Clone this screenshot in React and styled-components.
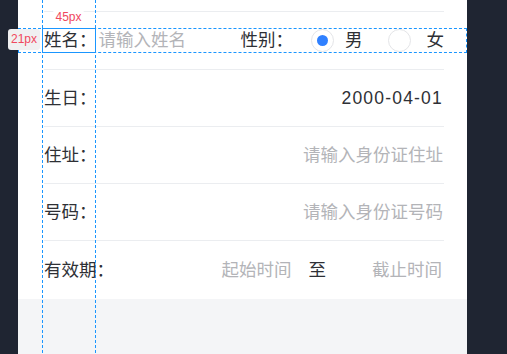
import React from "react";
import styled, { createGlobalStyle } from "styled-components";

const Global = createGlobalStyle`
  html, body { margin: 0; padding: 0; height: 100%; }
  body {
    background: #1f2532;
    font-family: "Liberation Sans", "Noto Sans CJK SC", sans-serif;
  }
  #root { height: 100%; }
`;

const Page = styled.div`
  position: relative;
  height: 354px;
  overflow: hidden;
  display: flex;
`;

const Panel = styled.div`
  margin-left: 18px;
  width: 449px;
  display: flex;
  flex-direction: column;
  background: #f4f5f7;
`;

const List = styled.div`
  background: #fff;
  padding: 0 23px 0 26px;
  font-size: 17.5px;
  color: #323233;
`;

const Row = styled.div`
  height: ${(p) => p.$h}px;
  display: flex;
  align-items: center;
  border-bottom: ${(p) => (p.$last ? "none" : "1px solid #ebedf0")};
  line-height: 1.2;
  white-space: nowrap;
`;

const Label = styled.span`
  flex: none;
  margin-right: ${(p) => p.$mr || 0}px;
  color: #2e3035;
`;

const Placeholder = styled.span`
  color: #b3b4b8;
  flex: ${(p) => (p.$grow ? 1 : "none")};
  text-align: ${(p) => p.$align || "left"};
  width: ${(p) => (p.$w ? `${p.$w}px` : "auto")};
  padding-right: ${(p) => p.$pr || 0}px;
`;

const Value = styled.span`
  margin-left: auto;
  margin-right: 1px;
  color: #2e3035;
  letter-spacing: 1.2px;
`;

const Spacer = styled.span`
  flex: 1;
`;

const To = styled.span`
  margin-left: 17px;
  color: #2e3035;
`;

const Radio = styled.span`
  flex: none;
  box-sizing: border-box;
  width: 23px;
  height: 23px;
  border-radius: 50%;
  border: 1px solid #e4e5e8;
  display: flex;
  align-items: center;
  justify-content: center;
  margin-left: ${(p) => p.$ml}px;
  &::after {
    content: "";
    width: 11px;
    height: 11px;
    border-radius: 50%;
    background: ${(p) => (p.$checked ? "#2f80ff" : "transparent")};
  }
`;

const OptionText = styled.span`
  margin-left: ${(p) => p.$ml}px;
  color: #2e3035;
`;

const Footer = styled.div`
  flex: 1;
  background: #f4f5f7;
`;

/* measurement overlay */
const VGuide = styled.div`
  position: absolute;
  top: 0;
  bottom: 0;
  left: ${(p) => p.$x}px;
  width: 1px;
  background: repeating-linear-gradient(
    to bottom,
    #1a96ff 0 3px,
    transparent 3px 5px
  );
  pointer-events: none;
`;

const DashedBand = styled.div`
  position: absolute;
  left: 18px;
  top: 28px;
  width: 449px;
  height: 25px;
  box-sizing: border-box;
  border: 1px dashed #1a96ff;
  pointer-events: none;
`;

const SelectBox = styled.div`
  position: absolute;
  left: 42px;
  top: 28px;
  width: 54px;
  height: 25px;
  box-sizing: border-box;
  border: 1px solid #1a96ff;
  pointer-events: none;
`;

const Tag = styled.div`
  position: absolute;
  left: ${(p) => p.$x}px;
  top: ${(p) => p.$y}px;
  width: ${(p) => p.$w}px;
  height: ${(p) => p.$h}px;
  background: ${(p) => p.$bg};
  border-radius: 3px;
  color: #f0485e;
  font-family: "Liberation Sans", Arial, sans-serif;
  font-size: 12px;
  line-height: ${(p) => p.$h}px;
  text-align: center;
  pointer-events: none;
`;

export default function App() {
  return (
    <>
      <Global />
      <Page>
        <Panel>
          <List>
            <Row $h={11} />
            <Row $h={57}>
              <Label $mr={2}>姓名：</Label>
              <Placeholder $grow>请输入姓名</Placeholder>
              <Label $mr={18}>性别：</Label>
              <Radio $checked $ml={0} />
              <OptionText $ml={11}>男</OptionText>
              <Radio $ml={25} />
              <OptionText $ml={16}>女</OptionText>
            </Row>
            <Row $h={56}>
              <Label>生日：</Label>
              <Value>2000-04-01</Value>
            </Row>
            <Row $h={56}>
              <Label>住址：</Label>
              <Spacer />
              <Placeholder $pr={1}>请输入身份证住址</Placeholder>
            </Row>
            <Row $h={56}>
              <Label>号码：</Label>
              <Spacer />
              <Placeholder $pr={1}>请输入身份证号码</Placeholder>
            </Row>
            <Row $h={58} $last>
              <Label>有效期：</Label>
              <Spacer />
              <Placeholder>起始时间</Placeholder>
              <To>至</To>
              <Placeholder $w={116} $pr={2} $align="right">截止时间</Placeholder>
            </Row>
          </List>
          <Footer />
        </Panel>

        <DashedBand />
        <VGuide $x={42} />
        <VGuide $x={95} />
        <SelectBox />
        <Tag $x={53} $y={10} $w={31} $h={15} $bg="#ffffff">45px</Tag>
        <Tag $x={8} $y={29} $w={32} $h={21} $bg="#f0f0f1">21px</Tag>
      </Page>
    </>
  );
}
